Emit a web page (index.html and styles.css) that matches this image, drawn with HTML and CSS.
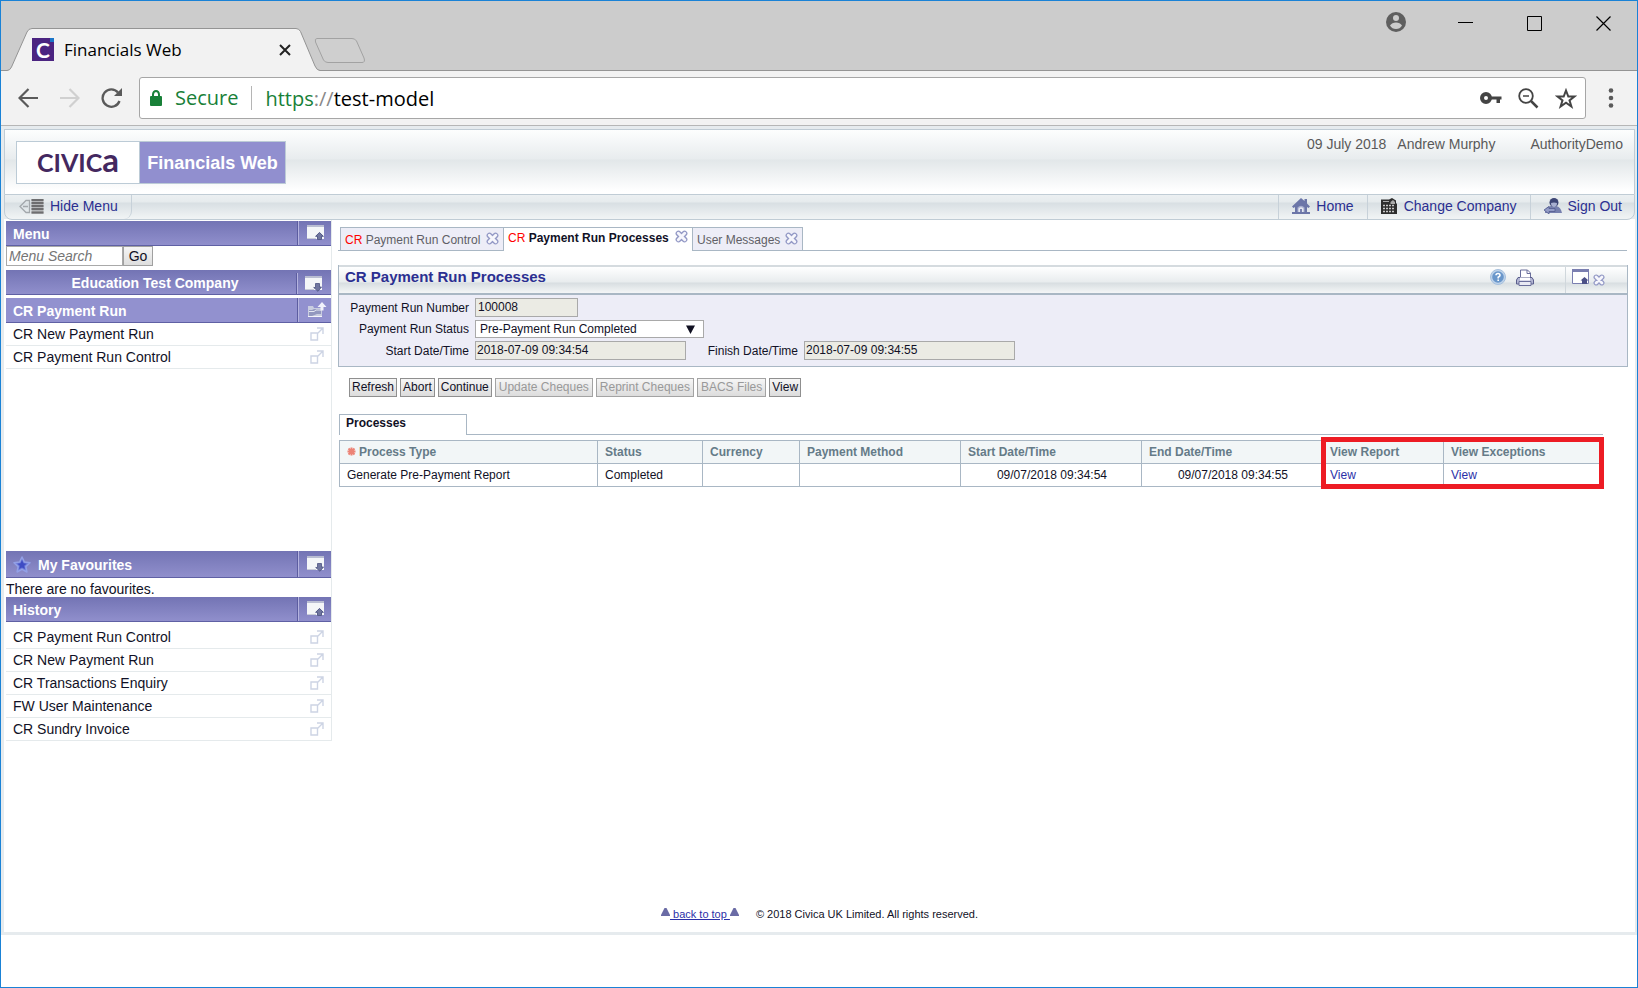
FILE: index.html
```html
<!DOCTYPE html>
<html lang="en">
<head>
<meta charset="utf-8">
<title>Financials Web</title>
<link rel="stylesheet" href="styles.css">
</head>
<body>
<svg width="0" height="0" class="defs" aria-hidden="true">
  <symbol id="win-up" viewBox="0 0 18 16">
    <path d="M0 0h17v14H0z" fill="#f4f6f8"/><path d="M0 0h17v2H0z" fill="#b9bdd2"/><path d="M0 13h9v1H0z" fill="#c9ccd8"/>
    <path d="M12.500 7L17 11.500h-2V15h-5v-3.500H8z" fill="#9298ba"/><path d="M12.500 7.500L16.300 11.300h-1.800V14.500h-4v-3.200H8.700z" fill="#70769f" stroke="#4d5382" stroke-width=".8"/>
  </symbol>
  <symbol id="win-down" viewBox="0 0 18 16">
    <path d="M0 0h17v14H0z" fill="#f4f6f8"/><path d="M0 0h17v2H0z" fill="#b9bdd2"/><path d="M0 13h9v1H0z" fill="#c9ccd8"/>
    <path d="M10.500 7.500h4v3.500h2L13 15.300 8.700 11.500h1.800z" fill="#70769f" stroke="#4d5382" stroke-width=".8"/>
  </symbol>
  <symbol id="folder-up" viewBox="0 0 20 16">
    <path d="M1 4h5l1 2h8v9H1z" fill="#c9cde0"/><path d="M2 8h3l2-1h7v5h-4l-5 2H2z" fill="#9398bf"/><path d="M2 9.500h5l2-1.500h5" fill="none" stroke="#e6e8f3"/><path d="M1 14h14v1H1z" fill="#f4f4fa"/>
    <path d="M15 0l4.500 5H16.500v3.500h-3V5h-3z" fill="#f2f2fb"/>
  </symbol>
  <symbol id="open" viewBox="0 0 14 14">
    <path d="M1 6h6.500v7H1zM7 1h6v6M12.500 1.500L7 7" fill="none" stroke="#cdd4e4" stroke-width="1.400"/>
  </symbol>
  <symbol id="close" viewBox="0 0 13 13">
    <path d="M3.500 3.500l6 6M9.500 3.500l-6 6" stroke="#9298c5" stroke-width="5.800" stroke-linecap="round"/>
    <path d="M3.300 3.300l6.400 6.400M9.700 3.300l-6.400 6.400" stroke="#f6f6fc" stroke-width="3" stroke-linecap="round"/>
  </symbol>
</svg>

<div class="window">
  <header class="titlebar">
    <div class="tab">
      <svg class="tab-shape" viewBox="0 0 370 43" width="370" height="43" aria-hidden="true">
        <path d="M0 43V42.500H6Q9 42.500 10.500 39L26 4Q27.500.500 31 .500H295Q298 .500 299.500 3.500L314 38Q316 42.500 319 42.500V43z" fill="#f2f2f2" stroke="none"/>
        <path d="M0 42.500H6Q9 42.500 10.500 39L26 4Q27.500.500 31 .500H295Q298 .500 299.500 3.500L314 38Q316 42.500 319 42.500H370" fill="none" stroke="#949494"/>
        <path d="M316 10.500H351Q354 10.500 355.500 13L363 30Q364.500 34.500 361 34.500H327Q324 34.500 322.500 32L314.500 14Q313.500 10.500 316 10.500z" fill="#cfcfcf" stroke="#a2a2a2"/>
      </svg>
      <span class="favicon">C</span>
      <span class="tab-title">Financials Web</span>
      <button class="icon-btn" aria-label="Close tab"><svg width="12" height="12" viewBox="0 0 12 12"><path d="M1 1l10 10M11 1L1 11" stroke="#222" stroke-width="2"/></svg></button>
    </div>
    <div class="controls">
      <button class="icon-btn profile" aria-label="Profile"><svg width="20" height="20" viewBox="0 0 20 20"><circle cx="10" cy="10" r="10" fill="#5f5f5f"/><circle cx="10" cy="6" r="3" fill="#ccc"/><path d="M4 13.500Q6 10.500 10 10.500T16 13.500Q14 17 10 17T4 13.500z" fill="#ccc"/></svg></button>
      <button class="icon-btn" aria-label="Minimise"><svg width="15" height="15" viewBox="0 0 15 15"><path d="M0 6.500h15" stroke="#000"/></svg></button>
      <button class="icon-btn" aria-label="Maximise"><svg width="15" height="15" viewBox="0 0 15 15"><path d="M.5.5h14v14H.5z" fill="none" stroke="#000"/></svg></button>
      <button class="icon-btn" aria-label="Close"><svg width="15" height="15" viewBox="0 0 15 15"><path d="M.5.5l14 14M14.500.5l-14 14" stroke="#000" stroke-width="1.200"/></svg></button>
    </div>
  </header>

  <div class="toolbar">
    <button class="icon-btn" aria-label="Back"><svg width="20" height="20" viewBox="0 0 20 20"><path d="M20 10H2M10.500 1L1.500 10l9 9" fill="none" stroke="#5a5a5a" stroke-width="2.200"/></svg></button>
    <button class="icon-btn" aria-label="Forward"><svg width="20" height="20" viewBox="0 0 20 20"><path d="M0 10h18M9.500 1l9 9-9 9" fill="none" stroke="#d0d0d0" stroke-width="2.200"/></svg></button>
    <button class="icon-btn reload" aria-label="Reload"><svg width="22" height="20" viewBox="0 0 22 20"><path d="M18.500 13A8.700 8.700 0 1 1 17 4.500" fill="none" stroke="#5a5a5a" stroke-width="2.300"/><path d="M21 0v8h-8z" fill="#5a5a5a"/></svg></button>
    <div class="omnibox">
      <svg width="12" height="17" viewBox="0 0 12 17" aria-hidden="true"><path d="M3 7V4.500a3 3.500 0 0 1 6 0V7" fill="none" stroke="#188038" stroke-width="2"/><rect y="6" width="12" height="10" rx="1" fill="#188038"/></svg>
      <span class="secure">Secure</span>
      <span class="url"><span class="scheme">https</span><span class="slashes">://</span>test-model</span>
      <button class="icon-btn" aria-label="Saved password"><svg width="22" height="12" viewBox="0 0 22 12"><circle cx="6" cy="6" r="4" fill="none" stroke="#444" stroke-width="4"/><path d="M10 4.500h11.500v3H20V11h-3.500V7.500H10z" fill="#444"/></svg></button>
      <button class="icon-btn" aria-label="Zoom"><svg width="21" height="21" viewBox="0 0 21 21"><circle cx="8" cy="8" r="6.800" fill="none" stroke="#444" stroke-width="1.800"/><path d="M5 8h6" stroke="#444" stroke-width="1.500"/><path d="M13 13l6.500 6.500" stroke="#444" stroke-width="2.500"/></svg></button>
      <button class="icon-btn" aria-label="Bookmark"><svg width="22" height="21" viewBox="0 0 22 21"><path d="M11 2.500l2.300 6h6.200l-5 3.900 1.900 6.100L11 14.800l-5.400 3.700 1.900-6.100-5-3.900h6.200z" fill="none" stroke="#444" stroke-width="2"/></svg></button>
    </div>
    <button class="icon-btn dots" aria-label="More"><svg width="6" height="20" viewBox="0 0 6 20"><g fill="#5a5a5a"><circle cx="3" cy="2.500" r="2.300"/><circle cx="3" cy="10" r="2.300"/><circle cx="3" cy="17.500" r="2.300"/></g></svg></button>
  </div>

  <div class="page">
    <header class="banner">
      <div class="brand"><span class="logo">CIVIC<span class="logo-a">a</span></span><span class="product">Financials Web</span></div>
      <div class="who"><span>09 July 2018</span><span>Andrew Murphy</span><span class="authority">AuthorityDemo</span></div>
    </header>
    <nav class="nav">
      <a href="#" class="hide-menu"><svg width="25" height="15" viewBox="0 0 25 15"><path d="M1 7.500L7 1.500h3.500v12H7zM4 7.500h5" fill="none" stroke="#a3a8ac" stroke-width="1.300"/><path d="M12.500 0h12v15h-12z" fill="#b4b6b8"/><path d="M12.500 1h12M12.500 4h12M12.500 7h12M12.500 10h12M12.500 13.500h12" stroke="#6e6e70" stroke-width="1.800"/></svg>Hide Menu</a>
      <a href="#" class="nav-link home"><svg width="18" height="16" viewBox="0 0 18 16"><path d="M9 0L0 8.500 1.500 10 3 9v5H0v2h18v-2h-3V9l1.500 1L18 8.500l-3-3V1h-2.500v2z" fill="#6c76a8"/><path d="M5.500 14V9.500Q9 6 12.500 9.500V14z" fill="#a9b0d0"/><path d="M6.500 14v-3.500Q9 8 11.500 10.500V14z" fill="#e4e7f0"/><path d="M8 14v-3h2v3z" fill="#7a82b0"/></svg>Home</a>
      <a href="#" class="nav-link company"><svg width="17" height="16" viewBox="0 0 17 16"><path d="M0 1.500h8L11 0l4 2.500V5l1 1v10H0z" fill="#2e2e2e"/><path d="M2 3h6v1H2zM9.500 4L12 2l2 2v2H9.500z" fill="#aaa"/><path d="M2 7.500h11M2 10.500h11M2 13.500h11" stroke="#c8c8c8" stroke-width="1.700" stroke-dasharray="2 1"/></svg>Change Company</a>
      <a href="#" class="nav-link signout"><svg width="18" height="16" viewBox="0 0 18 16"><path d="M1 15Q0 9 7 8h5q5 1 6 7z" fill="#7680ae"/><ellipse cx="10" cy="4.500" rx="4.500" ry="4.500" fill="#3d4675"/><path d="M7 5q3-1 6 0Q13 9 10 9T7 5z" fill="#a8b0d0"/><path d="M0 12l5-3.500V10.500h6v3H5v2.500z" fill="#939cc6" stroke="#525b8e" stroke-width=".8"/></svg>Sign Out</a>
    </nav>

    <div class="columns">
      <aside class="sidebar">
        <section class="menu-area">
          <h2 class="bar"><span class="bar-text">Menu</span><span class="bar-icon"><svg width="18" height="16"><use href="#win-up"/></svg></span></h2>
          <form class="search"><input type="text" placeholder="Menu Search" aria-label="Menu Search"><button type="button">Go</button></form>
          <h2 class="bar company-bar"><span class="bar-text">Education Test Company</span><span class="bar-icon"><svg width="18" height="16"><use href="#win-down"/></svg></span></h2>
          <h2 class="bar flat"><span class="bar-text">CR Payment Run</span><span class="bar-icon"><svg width="20" height="16"><use href="#folder-up"/></svg></span></h2>
          <ul class="items">
            <li><a href="#">CR New Payment Run</a><svg width="14" height="14"><use href="#open"/></svg></li>
            <li><a href="#">CR Payment Run Control</a><svg width="14" height="14"><use href="#open"/></svg></li>
          </ul>
        </section>
        <section>
          <h2 class="bar favourites"><span class="bar-text"><svg width="18" height="17" viewBox="0 0 18 17"><path d="M9 1l2.400 5 5.600.7-4.100 3.900 1 5.400L9 13.300 4.100 16l1-5.400L1 6.700 6.600 6z" fill="#6f7cd8" stroke="#93a0e6" stroke-width="1.500" stroke-linejoin="round"/><path d="M9 4l1.500 3.300 3 .400-2.300 2.100.700 3.200L9 11.500 6.100 13l.7-3.200-2.300-2.100 3-.4z" fill="#3f4cc4"/></svg>My Favourites</span><span class="bar-icon"><svg width="18" height="16"><use href="#win-down"/></svg></span></h2>
          <p class="none">There are no favourites.</p>
        </section>
        <section>
          <h2 class="bar"><span class="bar-text">History</span><span class="bar-icon"><svg width="18" height="16"><use href="#win-up"/></svg></span></h2>
          <ul class="items history">
            <li><a href="#">CR Payment Run Control</a><svg width="14" height="14"><use href="#open"/></svg></li>
            <li><a href="#">CR New Payment Run</a><svg width="14" height="14"><use href="#open"/></svg></li>
            <li><a href="#">CR Transactions Enquiry</a><svg width="14" height="14"><use href="#open"/></svg></li>
            <li><a href="#">FW User Maintenance</a><svg width="14" height="14"><use href="#open"/></svg></li>
            <li><a href="#">CR Sundry Invoice</a><svg width="14" height="14"><use href="#open"/></svg></li>
          </ul>
        </section>
      </aside>

      <main class="main">
        <div class="doc-tabs">
          <a href="#" class="doc-tab t1"><span><em>CR</em> Payment Run Control</span><svg width="13" height="13"><use href="#close"/></svg></a>
          <a href="#" class="doc-tab t2 active"><span><em>CR</em> Payment Run Processes</span><svg width="13" height="13"><use href="#close"/></svg></a>
          <a href="#" class="doc-tab t3"><span>User Messages</span><svg width="13" height="13"><use href="#close"/></svg></a>
        </div>

        <section class="panel">
          <div class="panel-head">
            <h1>CR Payment Run Processes</h1>
            <div class="panel-tools">
              <button class="icon-btn" aria-label="Help"><svg width="16" height="16" viewBox="0 0 16 16"><circle cx="8" cy="8" r="7.500" fill="#bfd3ea" stroke="#a5bfdd"/><circle cx="8" cy="8" r="5.800" fill="#6a97cb"/><path d="M6 6.300Q6 4.500 8 4.500T10 6.300Q10 7.300 8.200 8.200V9.500M8.200 10.500v1.500" fill="none" stroke="#fff" stroke-width="1.600"/></svg></button>
              <button class="icon-btn print" aria-label="Print"><svg width="18" height="17" viewBox="0 0 18 17"><path d="M4.500 9V1h7l3 3v5" fill="#fff" stroke="#6a6e9b"/><path d="M11 1v3.500h3" fill="none" stroke="#6a6e9b"/><path d="M2 8.500h14l1.500 2.500v4H.500v-4z" fill="#b3b6d3" stroke="#5a5e8c"/><path d="M4 8.500h10v3H4z" fill="#fff"/><path d="M3 12.500h12v4H3z" fill="#e8e9f3" stroke="#6a6e9b"/></svg></button>
              <span class="tool-pair">
                <button class="icon-btn" aria-label="Collapse"><svg width="17" height="16" viewBox="0 0 17 16"><path d="M.500.500h16v14H.500z" fill="#fff" stroke="#7a7eb0"/><path d="M0 0h17v3H0z" fill="#7a7eb0"/><path d="M12.500 8l4 3.500h-1.500V15h-5v-3.500H8.500z" fill="#4c5087"/></svg></button>
                <button class="icon-btn small-close" aria-label="Close panel"><svg width="12" height="12"><use href="#close"/></svg></button>
              </span>
            </div>
          </div>
          <form class="fields">
            <label for="num">Payment Run Number</label><input id="num" class="w-short" type="text" value="100008" readonly>
            <label for="status">Payment Run Status</label><div class="select-wrap"><select id="status"><option>Pre-Payment Run Completed</option></select><svg width="9" height="9" viewBox="0 0 9 9"><path d="M0 .500h9L4.500 9z" fill="#112"/></svg></div>
            <label for="start">Start Date/Time</label><div class="pair"><input id="start" class="w-long" type="text" value="2018-07-09 09:34:54" readonly><label for="finish">Finish Date/Time</label><input id="finish" class="w-long" type="text" value="2018-07-09 09:34:55" readonly></div>
          </form>
        </section>

        <div class="actions">
          <button>Refresh</button><button>Abort</button><button>Continue</button><button disabled>Update Cheques</button><button disabled>Reprint Cheques</button><button disabled>BACS Files</button><button>View</button>
        </div>

        <div class="processes">
          <div class="sub-tabs"><h2>Processes</h2></div>
          <div class="grid-wrap">
            <table class="grid">
              <colgroup><col class="c1"><col class="c2"><col class="c3"><col class="c4"><col class="c5"><col class="c6"><col class="c7"><col class="c8"></colgroup>
              <thead><tr><th><svg width="9" height="9" viewBox="0 0 9 9"><path d="M4.500 .5v8M.5 4.500h8M1.500 1.500l6 6M7.500 1.500l-6 6" stroke="#ec8376" stroke-width="2"/></svg>Process Type</th><th>Status</th><th>Currency</th><th>Payment Method</th><th>Start Date/Time</th><th>End Date/Time</th><th>View Report</th><th>View Exceptions</th></tr></thead>
              <tbody><tr><td>Generate Pre-Payment Report</td><td>Completed</td><td></td><td></td><td class="date">09/07/2018 09:34:54</td><td class="date">09/07/2018 09:34:55</td><td><a href="#">View</a></td><td><a href="#">View</a></td></tr></tbody>
            </table>
            <div class="highlight"></div>
          </div>
        </div>
      </main>
    </div>

    <footer class="footer">
      <a href="#"><svg width="9" height="8" viewBox="0 0 9 8"><path d="M3.500 0h2L9 7v1H0V7z" fill="#6a6ba5"/></svg><span>&nbsp;back to top&nbsp;</span><svg width="9" height="8" viewBox="0 0 9 8"><path d="M3.500 0h2L9 7v1H0V7z" fill="#6a6ba5"/></svg></a>
      <span>© 2018 Civica UK Limited. All rights reserved.</span>
    </footer>
  </div>
</div>
</body>
</html>
```
FILE: styles.css
```css
* { box-sizing: border-box; }
body { margin: 0; background: #fff; color: #111126; font-family: "Liberation Sans", Arial, sans-serif; font-size: 14px; }
h1, h2, p, ul { margin: 0; padding: 0; }
ul { list-style: none; }
a { color: inherit; text-decoration: none; }
svg { display: block; flex: none; }
.defs { position: absolute; }
button, input, select { font-family: inherit; color: inherit; }
.icon-btn { display: block; border: 0; padding: 0; background: none; flex: none; }

.window { display: flex; flex-direction: column; min-height: 100vh; border: 1px solid #1a82d6; }

/* Browser chrome */
.titlebar { display: flex; justify-content: space-between; height: 70px; background: #ccc; border-bottom: 1px solid #949494; }
.tab { position: relative; display: flex; align-items: center; width: 319px; margin-top: 27px; height: 43px; padding: 0 29px 0 31px; }
.tab-shape { position: absolute; left: 0; top: 0; }
.favicon { position: relative; width: 22px; height: 23px; background: linear-gradient(#1b75c9, #1b75c9) top right / 4px 4px no-repeat #4b2481; color: #fff; font: bold 21px/23px Lato, sans-serif; text-align: center; }
.tab-title { position: relative; flex: 1; margin-left: 10px; color: #000; font-family: "Open Sans", "Noto Sans", sans-serif; font-size: 17px; }
.tab .icon-btn { position: relative; }
.controls { display: flex; align-items: center; gap: 54px; height: 44px; padding-right: 26px; }
.profile { margin: 0 -2px 3px 0; }
.toolbar { display: flex; align-items: center; height: 55px; padding: 0 23px 0 17px; background: #f2f2f2; border-bottom: 1px solid #b6b6b6; gap: 22px; }
.reload { margin-left: -1px; }
.omnibox { flex: 1; display: flex; align-items: center; height: 42px; margin-left: -6px; padding: 0 8px 0 10px; border: 1px solid #a6a6a6; border-radius: 3px; background: #fff; gap: 16px; font-family: "Open Sans", "Noto Sans", sans-serif; font-size: 20px; }
.secure { margin-left: -3px; padding-right: 13px; border-right: 1px solid #b5b5b5; color: #188038; line-height: 24px; }
.url { flex: 1; margin-left: -3px; color: #000; }
.scheme { color: #188038; }
.slashes { color: #888; }

/* Application frame */
.page { flex: 1; display: flex; flex-direction: column; margin-bottom: 52px; padding-top: 3px; border: solid #e6ebee; border-width: 0 2px 3px 3px; background: linear-gradient(#e6ebee, #e6ebee) top / 100% 93px no-repeat #fff; }
.banner { display: flex; justify-content: space-between; height: 65px; padding: 11px 11px 0 11px; border: 1px solid #c0ccd5; border-bottom: 0; background: linear-gradient(#fdfefe, #e8ecee 29px, #e2e7e9 30px, #fff 61px); }
.brand { display: flex; height: 43px; border: 1px solid #bccbd6; background: #fff; }
.logo { display: flex; align-items: baseline; justify-content: center; width: 122px; color: #44285f; font: bold 25px/34px Lato, sans-serif; }
.logo-a { font-size: 33px; }
.product { width: 146px; border-left: 1px solid #bccbd6; background: #918fcf; color: #fff; font-size: 18px; font-weight: bold; line-height: 42px; text-align: center; }
.who { display: flex; gap: 11px; color: #595959; line-height: 16px; margin-top: -5px; }
.authority { margin-left: 24px; }
.nav { display: flex; height: 26px; border: 1px solid #c0ccd5; border-radius: 0 0 8px 8px; background: linear-gradient(#ecf0f2, #e6ebed 7px, #d8dfe3 8px, #f0f3f4 23px); color: #2b2f91; line-height: 22px; }
.hide-menu { display: flex; align-items: center; gap: 6px; width: 127px; padding: 0 0 2px 14px; margin-right: auto; border-right: 1px solid #c7d1d9; border-radius: 0 0 8px 8px; }
.nav-link { display: flex; align-items: center; gap: 6px; padding: 0 13px 2px; border-left: 1px solid #c7d1d9; }
.signout { padding-right: 12px; }

.columns { display: flex; }
.sidebar { width: 328px; flex: none; padding: 1px 0 0 2px; border-right: 1px solid #e5eaec; }
.menu-area { min-height: 330px; }
.bar { display: flex; height: 25px; background: linear-gradient(#7374b4, #908fcc); border-bottom: 1px solid #5f60a4; color: #fff; font-size: 14px; line-height: 26px; }
.bar-text { flex: 1; display: flex; align-items: center; gap: 7px; padding: 1px 0 0 7px; }
.bar-icon { display: flex; align-items: center; width: 33px; padding-left: 8px; border-left: 1px solid #b5b4df; box-shadow: -1px 0 #5c5da0; }
.flat { background: #9291cf; }
.company-bar { margin: 4px 0 3px; }
.company-bar .bar-text { justify-content: center; padding-left: 7px; }
.company-bar .bar-icon { width: 34px; margin-top: 3px; padding-left: 7px; }
.favourites { height: 27px; }
.search { display: flex; height: 20px; }
.search input { width: 117px; padding: 0 2px; border: 1px solid #a9a9a9; font-size: 14px; font-style: italic; }
.search input::placeholder { color: #757575; }
.search button { width: 30px; padding: 0; border: 1px solid #a0a0a0; background: linear-gradient(#f5f5f5, #dedede); font-size: 14px; }
.items li { display: flex; align-items: center; justify-content: space-between; height: 23px; padding: 0 7px; border-bottom: 1px solid #e5eaec; }
.history { padding-top: 4px; }
.none { line-height: 18px; padding-top: 2px; height: 19px; }

/* Main area */
.main { flex: 1; min-width: 0; padding: 7px 7px 0 6px; font-size: 12px; }
.doc-tabs { display: flex; height: 24px; padding-left: 2px; margin-right: 1px; background: linear-gradient(#a9b7c4, #a9b7c4) bottom / 100% 1px no-repeat; }
.doc-tab { display: flex; align-items: center; justify-content: space-between; padding: 1px 4px 0; border: 1px solid #a9b7c4; background: #ededf7; color: #5f5f66; }
.doc-tab svg { margin-bottom: 3px; }
.doc-tab em { color: #f00; font-style: normal; font-weight: normal; }
.t1 { width: 164px; }
.t2 { width: 188px; }
.t3 { width: 111px; }
.active { border-width: 1px 0 0; padding: 0 4px 3px; background: #fff; color: #111126; font-weight: bold; }
.panel { margin-top: 14px; border: 1px solid #a9b7c4; border-top: 0; background: #ededf7; }
.panel-head { display: flex; justify-content: space-between; height: 30px; border-top: 2px solid #d5dbdf; border-bottom: 2px solid #a9b7c4; background: linear-gradient(#fff, #e8ecee 15px, #d8dee1 16px, #f4f6f7); }
.panel-head h1 { padding-left: 6px; color: #2b2f91; font-size: 15px; line-height: 20px; }
.panel-tools { display: flex; padding-top: 2px; }
.print { margin: 0 31px 0 10px; }
.tool-pair { display: flex; gap: 4px; margin-top: -2px; padding: 2px 22px 0 6px; border-left: 1px solid #d0d7dc; }
.panel-tools .icon-btn { align-self: flex-start; }
.panel-tools .small-close { margin-top: 5px; }
.fields { display: grid; grid-template-columns: 130px 1fr; column-gap: 6px; row-gap: 3px; padding: 3px 0 6px; align-items: center; }
.fields label { text-align: right; }
.fields input { height: 19px; padding: 0 1px 2px; border: 1px solid #a9a9a9; background: #ebebe4; font-size: 12px; }
.fields .w-short { width: 103px; padding-left: 2px; }
.w-long { width: 211px; }
.select-wrap { position: relative; width: 229px; height: 18px; }
.select-wrap select { appearance: none; display: block; width: 100%; height: 100%; padding: 0 4px; border: 1px solid #a9a9a9; background: #fff; font-size: 12px; }
.select-wrap svg { position: absolute; right: 9px; top: 5px; pointer-events: none; }
.pair { display: flex; align-items: center; }
.pair label { width: 112px; margin-right: 6px; }
.actions { display: flex; gap: 3px; padding: 11px 0 0 11px; }
.actions button { height: 19px; padding: 0 2px; border: 1px solid #8f8f8f; background: linear-gradient(#f6f6f6, #dcdcdc); font-size: 12px; line-height: 15px; }
.actions button:disabled { padding: 0 3px; border-color: #a3a3a3; color: #999; }
.processes { margin: 17px 25px 0 1px; }
.sub-tabs { height: 21px; background: linear-gradient(#a9b7c4, #a9b7c4) bottom / 100% 1px no-repeat; }
.sub-tabs h2 { width: 128px; height: 21px; padding-left: 6px; border: 1px solid #a9b7c4; border-bottom: 0; background: #fff; font-size: 12px; line-height: 17px; }
.grid-wrap { position: relative; margin-top: 5px; }
.grid { width: 100%; table-layout: fixed; border-collapse: collapse; }
.grid th, .grid td { height: 23px; padding: 0 7px; border: 1px solid #a9b7c4; text-align: left; font-size: 12px; }
.grid th { background: #f2f6f7; color: #657b88; }
.grid th svg { display: inline-block; margin-right: 3px; }
.grid a { color: #2b2fa8; }
.grid .date { text-align: right; padding-right: 34px; }
.c1 { width: 258px; } .c2 { width: 105px; } .c3 { width: 97px; } .c4 { width: 161px; } .c5, .c6 { width: 181px; } .c7 { width: 121px; } .c8 { width: 160px; }
.highlight { position: absolute; top: -3px; right: -1px; bottom: -2px; width: 283px; border: 5px solid #ed1c24; pointer-events: none; }

.footer { display: flex; justify-content: center; gap: 17px; margin-top: auto; padding-bottom: 11px; font-size: 11px; line-height: 14px; }
.footer a { display: flex; color: #2b2fa8; }
.footer a svg { margin-top: 1px; }
.footer a span { text-decoration: underline; }
```
